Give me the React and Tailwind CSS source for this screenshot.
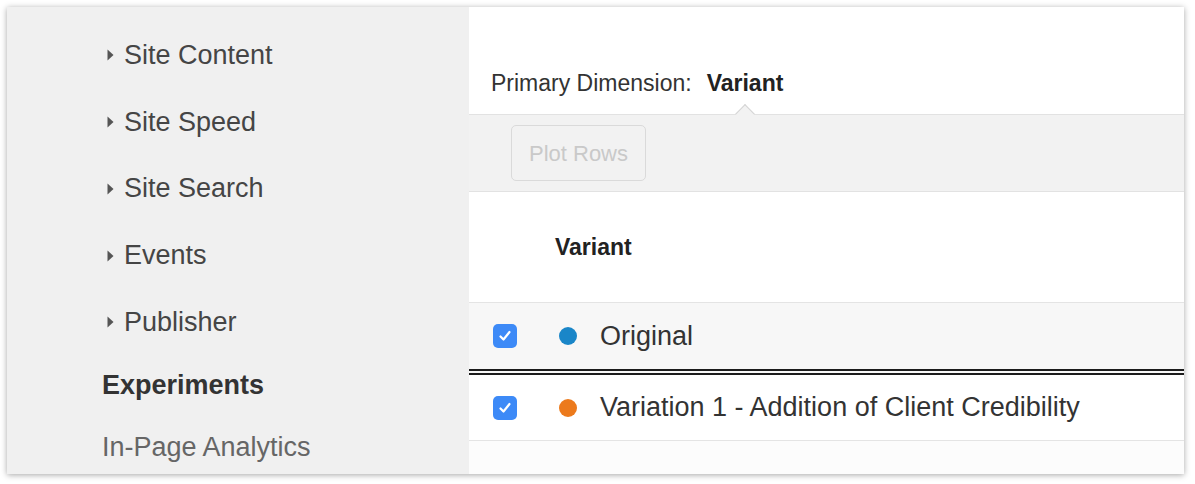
import React from "react";

const navItems = [
  { label: "Site Content", arrow: true, h: "h-[66.75px]" },
  { label: "Site Speed", arrow: true, h: "h-[66.75px]" },
  { label: "Site Search", arrow: true, h: "h-[66.75px]" },
  { label: "Events", arrow: true, h: "h-[66.75px]" },
  { label: "Publisher", arrow: true, h: "h-[66.75px]" },
  { label: "Experiments", bold: true, h: "h-[59px]" },
  { label: "In-Page Analytics", muted: true, h: "h-[65px]" },
];

const rows = [
  { name: "Original", dot: "bg-[#1a86c8]", rowClass: "h-[72px] bg-[#f7f7f7] border-b-[6px] border-double border-[#1c1c1c]" },
  { name: "Variation 1 - Addition of Client Credibility", dot: "bg-[#ec7a1c]", rowClass: "h-[66px] bg-white border-b border-[#e4e4e4]" },
];

function Arrow() {
  return (
    <svg width="9" height="14" viewBox="0 0 9 14" className="mr-[9px] shrink-0">
      <path d="M1.5 1.5 L7.5 7 L1.5 12.5 Z" fill="#555" />
    </svg>
  );
}

function Checkbox() {
  return (
    <span className="w-6 h-6 rounded-[5px] bg-[#3d8af7] flex items-center justify-center shrink-0">
      <svg width="14" height="14" viewBox="0 0 14 14">
        <path d="M2.5 7.5 L5.5 10.5 L11.5 3" fill="none" stroke="white" strokeWidth="2.2" strokeLinecap="round" strokeLinejoin="round" />
      </svg>
    </span>
  );
}

export default function App() {
  return (
    <div className="w-[1195px] h-[484px] bg-white pt-[7px] pl-[7px] pr-[11px] pb-[10px] font-['Liberation_Sans',Arial,sans-serif]">
      <div className="flex h-full shadow-[0_1px_6px_rgba(0,0,0,0.35)]">
        {/* sidebar */}
        <div className="w-[462px] bg-[#f0f0f0] pt-[15px] flex flex-col">
          {navItems.map((item) => (
            <div
              key={item.label}
              className={`${item.h} shrink-0 flex items-center ${item.arrow ? "pl-[99px]" : "pl-[95px]"} text-[27px] leading-none ${
                item.bold ? "font-bold text-[#333]" : item.muted ? "text-[#666]" : "text-[#454545]"
              }`}
            >
              {item.arrow && <Arrow />}
              <span>{item.label}</span>
            </div>
          ))}
        </div>

        {/* main panel */}
        <div className="flex-1 flex flex-col bg-white">
          <div className="h-[107px] shrink-0 flex items-end pl-[22px] pb-[18px] text-[23px] leading-[26px] text-[#333]">
            <span>Primary Dimension:</span>
            <span className="ml-[15px] font-bold text-[#222]">Variant</span>
          </div>

          <div className="relative h-[78px] shrink-0 bg-[#f2f2f2] border-y border-[#e2e2e2] pl-[42px] pt-[10px]">
            <span className="absolute left-[269px] top-[-8px] w-[14px] h-[14px] rotate-45 bg-[#f2f2f2] border-l border-t border-[#d4d4d4]" />
            <button className="w-[135px] h-[56px] rounded-[5px] border border-[#dadada] text-[22px] text-[#c9c9c9] flex items-center justify-center">
              Plot Rows
            </button>
          </div>

          <div className="h-[111px] shrink-0 flex items-center pl-[86px] border-b border-[#e4e4e4] text-[23px] font-bold text-[#222]">
            Variant
          </div>

          {rows.map((row) => (
            <div key={row.name} className={`${row.rowClass} shrink-0 flex items-center pl-[24px]`}>
              <Checkbox />
              <span className={`ml-[42px] w-[18px] h-[18px] rounded-full shrink-0 ${row.dot}`} />
              <span className="ml-[23px] text-[27px] text-[#333] leading-none">{row.name}</span>
            </div>
          ))}

          <div className="flex-1 bg-[#fcfcfc]" />
        </div>
      </div>
    </div>
  );
}
